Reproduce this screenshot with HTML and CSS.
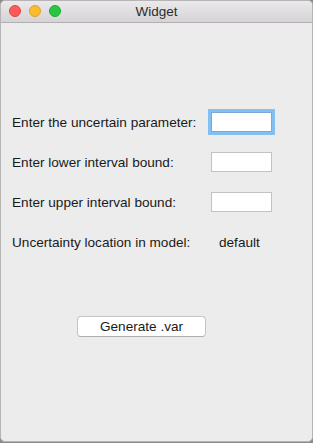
FILE: index.html
```html
<!DOCTYPE html>
<html lang="en">
<head>
    <meta charset="UTF-8">
    <meta name="viewport" content="width=device-width, initial-scale=1.0">
    <title>Widget</title>
    <link rel="stylesheet" href="styles.css">
</head>
<body>
    <div class="window">
        <div class="titlebar">
            <div class="lights">
                <span class="light close"></span>
                <span class="light minimize"></span>
                <span class="light zoom"></span>
            </div>
            <div class="title">Widget</div>
        </div>
        <div class="content">
            <div class="form">
                <label for="param">Enter the uncertain parameter:</label>
                <input type="text" id="param" class="field focused">
                <label for="lower">Enter lower interval bound:</label>
                <input type="text" id="lower" class="field">
                <label for="upper">Enter upper interval bound:</label>
                <input type="text" id="upper" class="field">
                <span class="label">Uncertainty location in model:</span>
                <span class="value">default</span>
            </div>
            <button class="generate">Generate .var</button>
        </div>
    </div>
</body>
</html>
```

FILE: styles.css
```css
html, body {
    margin: 0;
    height: 100%;
}

body {
    font-family: "Liberation Sans", Arial, sans-serif;
    background: #8a8a8a;
    color: #1a1a1a;
}

.window {
    box-sizing: border-box;
    height: 442px;
    background-color: #ececec;
    border: 1px solid #b5b5b5;
    border-radius: 5px;
    overflow: hidden;
}

.titlebar {
    position: relative;
    height: 21px;
    background: linear-gradient(to bottom, #ebe9eb, #d5d3d5);
    border-bottom: 1px solid #b1afb1;
    display: flex;
    align-items: center;
    justify-content: center;
}

.lights {
    position: absolute;
    left: 8px;
    top: 4px;
    display: flex;
    gap: 8px;
}

.light {
    width: 12px;
    height: 12px;
    border-radius: 50%;
    box-sizing: border-box;
}

.close {
    background-color: #fc5b57;
    border: 1px solid #de4642;
}

.minimize {
    background-color: #fdbb2f;
    border: 1px solid #dea127;
}

.zoom {
    background-color: #27c840;
    border: 1px solid #1eaa32;
}

.title {
    font-size: 13.5px;
    color: #2c2c2c;
}

.content {
    padding-top: 89px;
}

.form {
    display: grid;
    grid-template-columns: 199px 61px;
    grid-auto-rows: 20px;
    row-gap: 20px;
    align-items: center;
    padding-left: 11px;
    font-size: 13.6px;
}

.field {
    box-sizing: border-box;
    width: 61px;
    height: 20px;
    margin: 0;
    border: 1px solid #c2c2c2;
    background: #fff;
    outline: none;
}

.field.focused {
    border-color: #7fa6d6;
    box-shadow: 0 0 0 3px #84bff2;
}

.value {
    padding-left: 8px;
}

.generate {
    display: block;
    box-sizing: border-box;
    width: 129px;
    height: 21px;
    margin: 64px 0 0 76px;
    padding: 0;
    font-family: "Liberation Sans", Arial, sans-serif;
    font-size: 13.6px;
    color: #1a1a1a;
    background: #fff;
    border: 1px solid #c4c4c4;
    border-bottom-color: #aeaeae;
    border-radius: 4px;
}
```
